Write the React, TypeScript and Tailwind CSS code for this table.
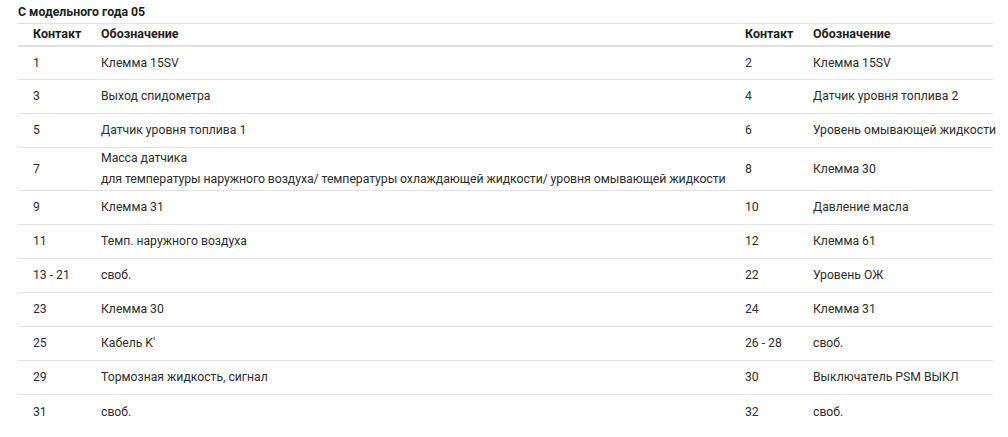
const ROWS: [string, React.ReactNode, string, string][] = [
  ['1', 'Клемма 15SV', '2', 'Клемма 15SV'],
  ['3', 'Выход спидометра', '4', 'Датчик уровня топлива 2'],
  ['5', 'Датчик уровня топлива 1', '6', 'Уровень омывающей жидкости'],
  [
    '7',
    <div className="tracking-[-0.08px] leading-[21px] text-[12.3px]">
      <div>Масса датчика</div>
      <div>для температуры наружного воздуха/ температуры охлаждающей жидкости/ уровня омывающей жидкости</div>
    </div>,
    '8',
    'Клемма 30',
  ],
  ['9', 'Клемма 31', '10', 'Давление масла'],
  ['11', 'Темп. наружного воздуха', '12', 'Клемма 61'],
  ['13 - 21', 'своб.', '22', 'Уровень ОЖ'],
  ['23', 'Клемма 30', '24', 'Клемма 31'],
  ['25', 'Кабель K\'', '26 - 28', 'своб.'],
  ['29', 'Тормозная жидкость, сигнал', '30', 'Выключатель PSM ВЫКЛ'],
  ['31', 'своб.', '32', 'своб.'],
]

const COLS = 'grid grid-cols-[68px_644px_68px_195px]'

export default function App() {
  return (
    <div className="w-[1008px] h-[437px] bg-white overflow-hidden font-['Roboto',sans-serif] text-[#2e2e2e]">
      <div className="pl-[18px] pt-[4px] h-[23px] text-[12.3px] font-bold text-[#1e1e1e] leading-[17px]">С модельного года 05</div>
      <div className="ml-[18px] w-[975px] border-t border-[#e3e3e3]">
        <div className={`${COLS} h-[23px] items-center border-b-2 border-[#dedede] text-[12.5px] font-bold text-[#1e1e1e]`}>
          <div className="pl-[15px]">Контакт</div>
          <div className="pl-[15px]">Обозначение</div>
          <div className="pl-[15px]">Контакт</div>
          <div className="pl-[15px]">Обозначение</div>
        </div>
        {ROWS.map((r, i) => (
          <div
            key={i}
            className={`${COLS} items-center text-[12.2px] whitespace-nowrap ${i === 3 ? 'h-[43px]' : i === 0 ? 'h-[33px]' : 'h-[34px]'} ${i < ROWS.length - 1 ? 'border-b border-[#e3e3e3]' : ''}`}
          >
            <div className="pl-[15px]">{r[0]}</div>
            <div className="pl-[15px]">{r[1]}</div>
            <div className="pl-[15px]">{r[2]}</div>
            <div className="pl-[15px]">{r[3]}</div>
          </div>
        ))}
      </div>
    </div>
  )
}
